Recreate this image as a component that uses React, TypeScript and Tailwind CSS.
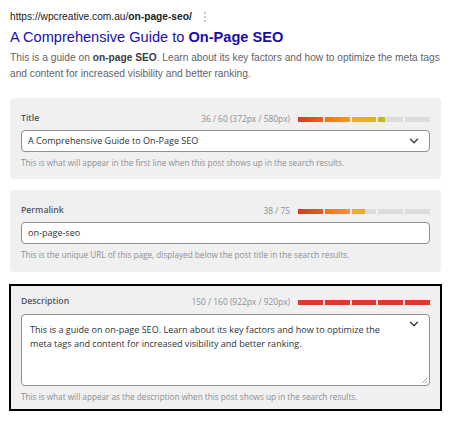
import { ChevronDown } from 'lucide-react'

interface Segment {
    fill: number
    color: string
}

interface FieldProps {
    label: string
    counter: string
    segments: Segment[]
    help: string
    multiline?: boolean
    chevron?: boolean
    value: string[]
    className: string
}

function ScoreBar({ segments }: { segments: Segment[] }) {
    return (
        <div className="w-[132px] h-[5px] flex gap-[2px]">
            {
                segments.map((seg, i) => (
                    <div key={ i } className="flex-1 h-full bg-[#dcdcde] relative">
                        <div className="absolute inset-y-0 left-0" style={{ width: `${seg.fill * 100}%`, background: seg.color }} />
                    </div>
                ))
            }
        </div>
    )
}

function Field({ label, counter, segments, help, multiline, chevron, value, className }: FieldProps) {
    return (
        <div className={`bg-[#f0f0f1] ${className}`}>
            <div className={`flex items-center h-[14px] ${multiline ? 'mb-[5px]' : 'mb-[4px]'}`}>
                <span className="text-[8.7px] font-semibold text-[#50575e]">{ label }</span>
                <span className="ml-auto mr-[8px] text-[8.4px] text-[#8c8f94]">{ counter }</span>
                <ScoreBar segments={ segments } />
            </div>
            {
                multiline ? (
                    <div className="relative h-[72px] bg-white border border-[#8c8f94] rounded-[4px] pl-[8px] pr-[30px] pt-[8px] text-[9.05px] leading-[14px] text-[#2c3338]">
                        { value.map(line => <div key={ line } className="whitespace-nowrap">{ line }</div>) }
                        <ChevronDown size={ 14 } strokeWidth={ 2.5 } className="absolute right-[8px] top-[2px] text-[#3c434a]" />
                        <svg width="7" height="7" viewBox="0 0 7 7" className="absolute right-[1px] bottom-[1px]">
                            <path d="M6 1L1 6M6 4L4 6" stroke="#8c8f94" strokeWidth="0.8" />
                        </svg>
                    </div>
                ) : (
                    <div className="h-[22px] bg-white border border-[#8c8f94] rounded-[4px] pl-[6px] pr-[8px] flex items-center text-[9.05px] text-[#2c3338]">
                        <span className="flex-1">{ value[0] }</span>
                        { chevron && <ChevronDown size={ 14 } strokeWidth={ 2.5 } className="text-[#3c434a]" /> }
                    </div>
                )
            }
            <p className="mt-[5px] text-[8.2px] leading-[12px] text-[#8c8f94]">{ help }</p>
        </div>
    )
}

export default function App() {
    return (
        <div className="w-[456px] h-[422px] bg-white px-[10px] pt-[9px] font-['Open_Sans',sans-serif]">
            <div className="font-['Liberation_Sans',Arial,sans-serif]">
                <div className="flex items-center h-[16px] text-[10.2px] text-[#202124]">
                    <span>https://wpcreative.com.au/<b>on-page-seo/</b></span>
                    <svg width="4" height="12" viewBox="0 0 4 12" className="ml-[11px]">
                        <circle cx="2" cy="2" r="1" fill="#b0b4b8" />
                        <circle cx="2" cy="6" r="1" fill="#b0b4b8" />
                        <circle cx="2" cy="10" r="1" fill="#b0b4b8" />
                    </svg>
                </div>
                <h1 className="mt-[2px] text-[14.6px] leading-[20px] text-[#1a0dab]">
                    A Comprehensive Guide to <b>On-Page SEO</b>
                </h1>
                <p className="mt-[3px] text-[10.2px] leading-[16px] text-[#5f6368]">
                    This is a guide on <b className="text-[#3c4043]">on-page SEO</b>. Learn about its key factors and how to optimize the meta tags and content for increased visibility and better ranking.
                </p>
            </div>
            <div className="mt-[16px] flex flex-col gap-[11px] w-[431px]">
                <Field
                    className="rounded px-[11px] pt-[14px] pb-[10px]"
                    label="Title"
                    counter="36 / 60 (372px / 580px)"
                    segments={[
                        { fill: 1, color: 'linear-gradient(90deg,#dd3a24,#e8611f)' },
                        { fill: 1, color: 'linear-gradient(90deg,#ec7420,#f29a1e)' },
                        { fill: 1, color: '#e8b31a' },
                        { fill: 0.27, color: '#c8b61b' },
                        { fill: 0, color: '' },
                    ]}
                    chevron
                    value={['A Comprehensive Guide to On-Page SEO']}
                    help="This is what will appear in the first line when this post shows up in the search results."
                />
                <Field
                    className="rounded px-[11px] pt-[14px] pb-[11px]"
                    label="Permalink"
                    counter="38 / 75"
                    segments={[
                        { fill: 1, color: 'linear-gradient(90deg,#dd3a24,#e65a22)' },
                        { fill: 1, color: 'linear-gradient(90deg,#ec7420,#f29a1e)' },
                        { fill: 0.55, color: '#e8b31a' },
                        { fill: 0, color: '' },
                        { fill: 0, color: '' },
                    ]}
                    value={['on-page-seo']}
                    help="This is the unique URL of this page, displayed below the post title in the search results."
                />
                <Field
                    className="mt-[1px] -mx-[1px] border-2 border-black px-[10px] pt-[9px] pb-[6px]"
                    label="Description"
                    counter="150 / 160 (922px / 920px)"
                    segments={[
                        { fill: 1, color: '#dd3a2e' },
                        { fill: 1, color: '#dd3a2e' },
                        { fill: 1, color: '#dd3a2e' },
                        { fill: 1, color: '#dd3a2e' },
                        { fill: 1, color: '#dd3a2e' },
                    ]}
                    multiline
                    value={[
                        'This is a guide on on-page SEO. Learn about its key factors and how to optimize the',
                        'meta tags and content for increased visibility and better ranking.',
                    ]}
                    help="This is what will appear as the description when this post shows up in the search results."
                />
            </div>
        </div>
    )
}
